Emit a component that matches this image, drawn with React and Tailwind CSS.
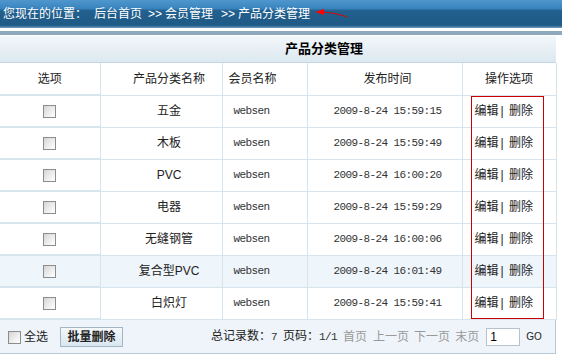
import React from "react";

const rows = [
  { name: "五金", user: "websen", time: "2009-8-24 15:59:15" },
  { name: "木板", user: "websen", time: "2009-8-24 15:59:49" },
  { name: "PVC", user: "websen", time: "2009-8-24 16:00:20" },
  { name: "电器", user: "websen", time: "2009-8-24 15:59:29" },
  { name: "无缝钢管", user: "websen", time: "2009-8-24 16:00:06" },
  { name: "复合型PVC", user: "websen", time: "2009-8-24 16:01:49", hot: true },
  { name: "白炽灯", user: "websen", time: "2009-8-24 15:59:41" },
];

// 老式的灰色复选框
function Box() {
  return (
    <span className="inline-block w-[13px] h-[13px] border border-[#8c8c8c] bg-[linear-gradient(135deg,#d4d4d4_0%,#f0f0f0_60%,#ffffff_100%)] align-middle" />
  );
}

const mono = "font-['Liberation_Mono',monospace] text-[11px] tracking-[-0.6px] text-[#333]";

function App() {
  return (
    <div className="w-[562px] h-[364px] bg-white text-[12px] text-[#222] font-['Liberation_Sans','Noto_Sans_CJK_SC',sans-serif] overflow-hidden">
      {/* 顶部位置栏 */}
      <div className="relative h-[28px] flex items-center pl-[3px] text-white bg-[linear-gradient(to_bottom,#4f97cd_0%,#3a84bf_30%,#22608e_38%,#1f5a86_90%,#6d9dc1_100%)]">
        <span>您现在的位置：</span>
        <span className="ml-[7px]">后台首页</span>
        <span className="ml-[6px] mr-[3px]">&gt;&gt;</span>
        <span>会员管理</span>
        <span className="ml-[8px] mr-[3px]">&gt;&gt;</span>
        <span>产品分类管理</span>
        <svg className="ml-[4px]" width="34" height="12" viewBox="0 0 34 12">
          <path d="M9 4 C 18 5, 26 6, 33 9" stroke="#e00000" strokeWidth="1" fill="none" />
          <path d="M1 4 L10 1 L10 7 Z" fill="#ff0000" />
        </svg>
      </div>
      <div className="h-[3px] bg-white" />
      <div className="h-[4px] bg-[#8fa9bc]" />
      <div className="h-[1px] bg-white" />

      <div className="w-[556px]">
        {/* 标题 */}
        <div className="h-[27px] flex items-center justify-center pl-[92px] font-bold text-[13px] text-black bg-[linear-gradient(to_bottom,#f3f7fa,#dce8f0)] border-b border-[#c6d6e2]">
          产品分类管理
        </div>

        <div className="relative">
          <table className="w-[556px] table-fixed border-collapse">
            <colgroup>
              <col className="w-[100px]" />
              <col className="w-[122px]" />
              <col className="w-[85px]" />
              <col className="w-[155px]" />
              <col className="w-[94px]" />
            </colgroup>
            <thead>
              <tr className="h-[32px]">
                <th className="font-normal text-center border-r border-b-2 border-[#d6e4ee]">选项</th>
                <th className="font-normal text-center pl-[16px] border-r border-b border-[#d6e4ee]">产品分类名称</th>
                <th className="font-normal text-left pl-[6px] border-r border-b border-[#d6e4ee]">会员名称</th>
                <th className="font-normal text-center pl-[6px] border-r border-b border-[#d6e4ee]">发布时间</th>
                <th className="font-normal text-center border-r border-b border-[#d6e4ee]">操作选项</th>
              </tr>
            </thead>
            <tbody>
              {rows.map((r, i) => (
                <tr key={i} className={"h-[32px] " + (r.hot ? "bg-[#eef5fb]" : "")}>
                  <td className="text-center border-r border-b-2 border-[#d6e4ee] leading-none">
                    <Box />
                  </td>
                  <td className="text-center pl-[16px] border-r border-b border-[#d6e4ee]">{r.name}</td>
                  <td className={"text-left pl-[11px] border-r border-b border-[#d6e4ee] " + mono}>{r.user}</td>
                  <td className={"text-center pl-[6px] border-r border-b border-[#d6e4ee] " + mono}>{r.time}</td>
                  <td className="pl-[12px] border-r border-b border-[#d6e4ee] whitespace-nowrap">
                    编辑<span className="mx-[2px]">|</span> 删除
                  </td>
                </tr>
              ))}
            </tbody>
          </table>
          {/* 红色标注框 */}
          <div className="absolute left-[471px] top-[33px] w-[73px] h-[223px] border border-[#cc0000] pointer-events-none" />
        </div>

        {/* 底部操作栏 */}
        <div className="h-[34px] flex items-center bg-[#eef4f9] border-b border-r border-[#b9cad7]">
          <span className="ml-[8px]"><Box /></span>
          <span className="ml-[3px]">全选</span>
          <button className="ml-[12px] h-[20px] w-[63px] border border-[#a3b6c6] bg-[linear-gradient(to_bottom,#f4f8fb,#d9e6ef)] text-[12px] font-bold text-[#222]">
            批量删除
          </button>
          <span className="ml-[88px]">总记录数：<span className={mono}>7</span></span>
          <span className="ml-[6px]">页码：<span className={mono}>1/1</span></span>
          <span className="ml-[6px] text-[#999]">首页</span>
          <span className="ml-[6px] text-[#999]">上一页</span>
          <span className="ml-[5px] text-[#999]">下一页</span>
          <span className="ml-[5px] text-[#999]">末页</span>
          <span className="ml-[7px] w-[34px] h-[18px] bg-white border border-[#b5c3cf] text-[12px] leading-[16px] pl-[3px] text-black">1</span>
          <span className="ml-[6px] text-[10px]">GO</span>
        </div>
      </div>
    </div>
  );
}

export default App;
